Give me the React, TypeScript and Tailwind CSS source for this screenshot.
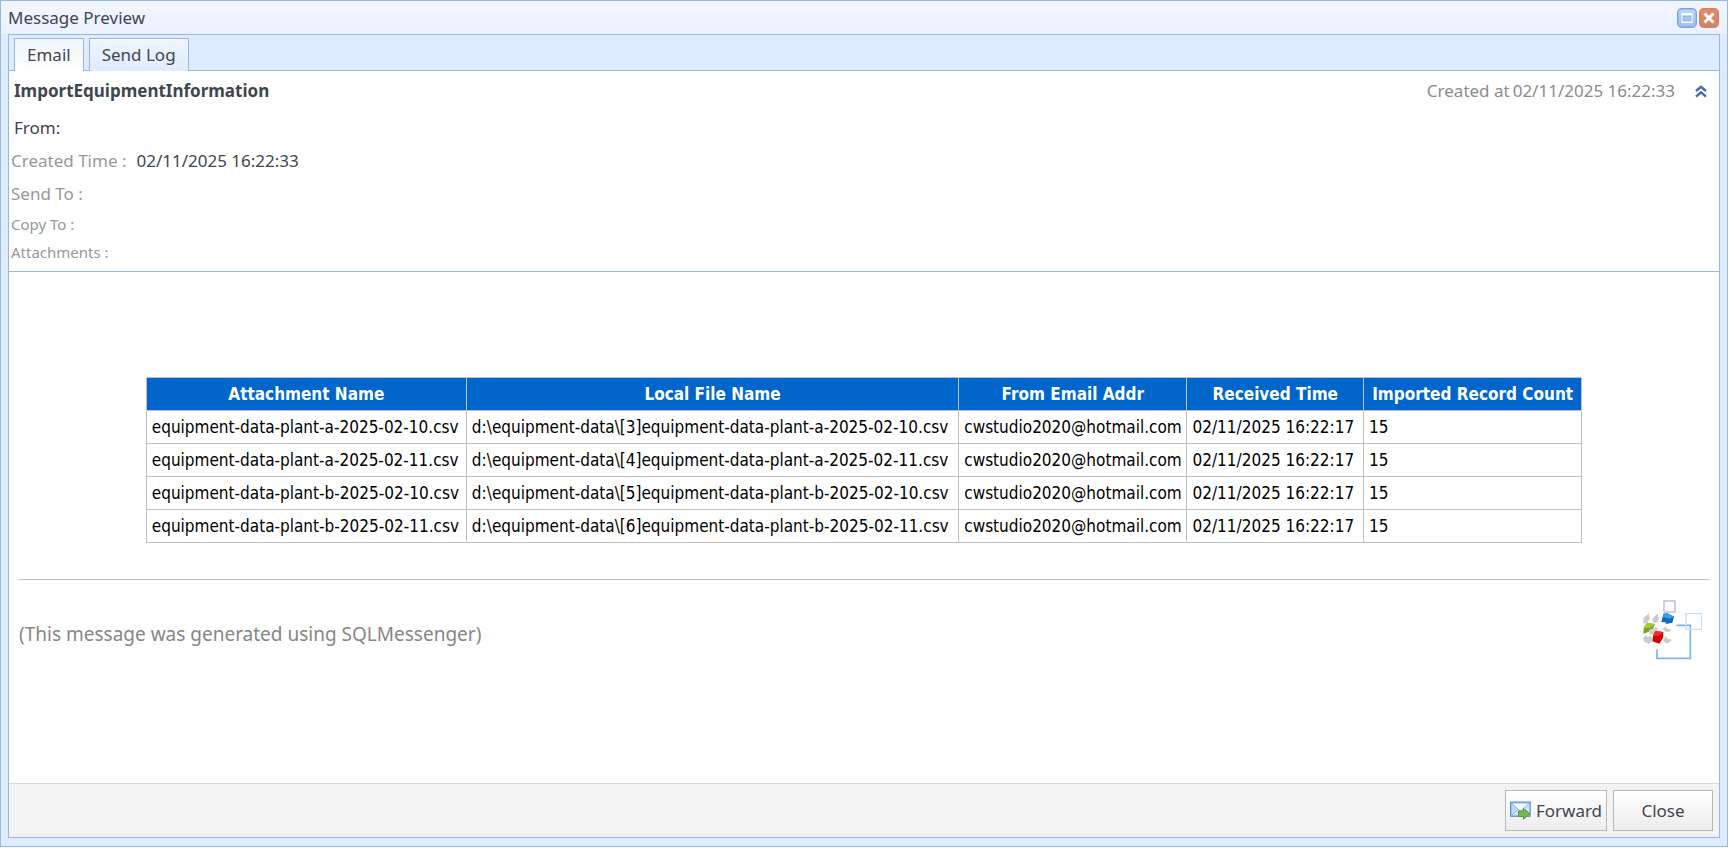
import { useState } from "react";

interface ImportedFile {
  attachment: string;
  localFile: string;
  from: string;
  received: string;
  count: number;
}

const files: ImportedFile[] = [
  {
    attachment: "equipment-data-plant-a-2025-02-10.csv",
    localFile: "d:\\equipment-data\\[3]equipment-data-plant-a-2025-02-10.csv",
    from: "cwstudio2020@hotmail.com",
    received: "02/11/2025 16:22:17",
    count: 15,
  },
  {
    attachment: "equipment-data-plant-a-2025-02-11.csv",
    localFile: "d:\\equipment-data\\[4]equipment-data-plant-a-2025-02-11.csv",
    from: "cwstudio2020@hotmail.com",
    received: "02/11/2025 16:22:17",
    count: 15,
  },
  {
    attachment: "equipment-data-plant-b-2025-02-10.csv",
    localFile: "d:\\equipment-data\\[5]equipment-data-plant-b-2025-02-10.csv",
    from: "cwstudio2020@hotmail.com",
    received: "02/11/2025 16:22:17",
    count: 15,
  },
  {
    attachment: "equipment-data-plant-b-2025-02-11.csv",
    localFile: "d:\\equipment-data\\[6]equipment-data-plant-b-2025-02-11.csv",
    from: "cwstudio2020@hotmail.com",
    received: "02/11/2025 16:22:17",
    count: 15,
  },
];

function MaximizeIcon() {
  return (
    <svg width="20" height="20" viewBox="0 0 20 20" aria-hidden="true">
      <defs>
        <linearGradient id="maxFill" x1="0" y1="0" x2="0" y2="1">
          <stop offset="0" stopColor="#bcd5f8" />
          <stop offset="1" stopColor="#9dc0f2" />
        </linearGradient>
      </defs>
      <rect x="0.7" y="0.7" width="18.6" height="18.6" rx="4" fill="url(#maxFill)" stroke="#7ba6e0" strokeWidth="1.4" />
      <rect x="4.500" y="5" width="11" height="10" fill="#fff" />
      <rect x="6" y="8" width="8" height="5" fill="#a9c6f2" stroke="#7ba7e2" strokeWidth="0.8" />
    </svg>
  );
}

function CloseIcon() {
  return (
    <svg width="20" height="20" viewBox="0 0 20 20" aria-hidden="true">
      <defs>
        <linearGradient id="closeFill" x1="0" y1="0" x2="0" y2="1">
          <stop offset="0" stopColor="#e58a6c" />
          <stop offset="1" stopColor="#cf8468" />
        </linearGradient>
      </defs>
      <rect x="0.7" y="0.7" width="18.6" height="18.6" rx="4" fill="url(#closeFill)" stroke="#d5805f" strokeWidth="1.4" />
      <path d="M5.500 5.500l9 9M14.500 5.500l-9 9" stroke="#fff" strokeWidth="3" />
    </svg>
  );
}

function CollapseIcon() {
  return (
    <svg width="12" height="13" viewBox="0 0 12 13" aria-hidden="true">
      <path d="M1 6l5-4.200L11 6M1 11.600l5-4.200 5 4.200" fill="none" stroke="#466aae" strokeWidth="2.400" />
    </svg>
  );
}

function ForwardIcon() {
  return (
    <svg width="21" height="19" viewBox="0 0 21 19" aria-hidden="true">
      <defs>
        <linearGradient id="mailFill" x1="0" y1="0" x2="1" y2="1">
          <stop offset="0" stopColor="#a9d3f5" />
          <stop offset="1" stopColor="#e6f2fc" />
        </linearGradient>
      </defs>
      <rect x="0.7" y="1.2" width="19.4" height="14" fill="url(#mailFill)" stroke="#5b8fd0" strokeWidth="1.3" />
      <path d="M1.4 2l9 8.2 9-8.2z" fill="#f4f9fe" stroke="#8fb2e0" strokeWidth="0.9" />
      <path d="M1.4 14.6l6.4-6.4" stroke="#7ea8dd" strokeWidth="0.9" />
      <path d="M8.500 10h5V7.400l6.400 5.400-6.400 5.400v-2.700h-5z" fill="#74b94c" stroke="#4c9a38" strokeWidth="1" strokeLinejoin="round" />
    </svg>
  );
}

function SqlMessengerLogo() {
  return (
    <svg width="60" height="60" viewBox="33 30 180 180" role="img" aria-label="SQLMessenger">
      <rect x="99" y="33" width="33" height="33" fill="#fff" stroke="#b9b4d8" strokeWidth="4" />
      {/* grey cubes */}
      <g fill="#cbcccc">
        <path d="M38 83l16-13v10l4 4-10 14-11 3z" />
        <path d="M65 85l16-15v10l4 3-4 12-10 5-6-5z" />
        <path d="M55 119l11-1 12-8 2 12-8 4-6 8-11-1z" />
        <path d="M95 117l10-9 1 7 16 5-10 6-12-2z" />
        <path d="M37 143l8-7 5 4 10-3 4 8-2 11-9 6-16-8z" />
        <path d="M98 147l7-10 2 8 16 5-14 11-12-7z" />
      </g>
      <path d="M48 98l23 4-5 15-11 2-1 6-17 6 1-18z" fill="#7fa31c" />
      <path d="M48 98l23 4-14 12-19-1z" fill="#a2cb38" />
      <path d="M97 72l11-3 21 11-5 18-19 4-1-5-13-1z" fill="#0d6fb4" />
      <path d="M97 72l11-3 21 11-15 6-18-6z" fill="#38a0e8" />
      <path d="M73 123l24 3-1 18-11 17-21-7 2-17z" fill="#cc0606" />
      <path d="M73 123l24 3-13 11-18 0z" fill="#fb2b2b" />
      <path d="M136 106h42v99H78V178" fill="none" stroke="#86b2de" strokeWidth="5" />
      <rect x="165" y="71" width="47" height="47" fill="none" stroke="#c6e2f8" strokeWidth="4" />
    </svg>
  );
}

export default function App() {
  const [tab, setTab] = useState("email");
  const [collapsed, setCollapsed] = useState(false);

  const tabClass = "border border-b-0 border-[#95b8ea] px-3 text-[17px] leading-8 ";
  const buttonClass =
    "flex h-[41px] items-center justify-center border border-[#b8b8b8] bg-gradient-to-b from-white to-[#ededed] text-[17px] text-[#3f464d]";

  return (
    <div className="h-screen min-h-[640px] bg-white pr-px pb-px font-['Noto_Sans',sans-serif] text-[#3f464d]">
      <div className="flex h-full flex-col border border-[#95b8ea] bg-[#dfebfe] px-[7px] pb-2">
        {/* Title bar */}
        <header className="-mx-[7px] flex h-[33px] shrink-0 items-center justify-between bg-gradient-to-b from-[#f2f6fe] to-[#ebf2fe] pr-2 pl-[7px]">
          <h1 className="text-[17px]">Message Preview</h1>
          <div className="flex gap-[2px]">
            <button aria-label="Maximize"><MaximizeIcon /></button>
            <button aria-label="Close window"><CloseIcon /></button>
          </div>
        </header>

        <main className="flex min-h-0 flex-1 flex-col border border-[#95b8ea] bg-white">
          {/* Tabs */}
          <div role="tablist" className="flex h-9 shrink-0 items-end gap-[5px] bg-[#dfebfe] pl-[5px] shadow-[inset_0_-1px_0_#95b8ea]">
            <button
              role="tab"
              aria-selected={tab === "email"}
              onClick={() => setTab("email")}
              className={tabClass + (tab === "email" ? "bg-gradient-to-b from-[#f0f5fe] to-white" : "bg-[#e6effd]")}
            >
              Email
            </button>
            <button
              role="tab"
              aria-selected={tab === "log"}
              onClick={() => setTab("log")}
              className={tabClass + (tab === "log" ? "bg-white" : "bg-gradient-to-b from-[#f0f5fe] to-[#e0ebfd]")}
            >
              Send Log
            </button>
          </div>

          {/* Message header */}
          <section className="shrink-0 border-b border-[#95b8ea] pb-[5px]">
            <div className="flex h-10 items-center justify-between pr-3 pl-[5px]">
              <h2 className="text-[17px] font-bold">ImportEquipmentInformation</h2>
              <div className="flex items-center text-[17px] text-[#8b8b8b]">
                <span>Created at</span>
                <span className="ml-[3px]">02/11/2025 16:22:33</span>
                <button aria-label="Collapse details" onClick={() => setCollapsed(!collapsed)} className="ml-5">
                  <CollapseIcon />
                </button>
              </div>
            </div>
            {!collapsed && (
              <>
                <p className="pl-[5px] text-[17px] leading-[33px]">From:</p>
                <p className="flex gap-[10px] pl-[2px] text-[17px] leading-[33px]">
                  <span className="text-[#96999c]">Created Time :</span>
                  <span>02/11/2025 16:22:33</span>
                </p>
                <p className="pl-[2px] text-[17px] leading-[33px] text-[#96999c]">Send To :</p>
                <p className="pl-[2px] text-[15px] leading-7 text-[#96999c]">Copy To :</p>
                <p className="pl-[2px] text-[15px] leading-7 text-[#96999c]">Attachments :</p>
              </>
            )}
          </section>

          {/* Message body */}
          <section className="min-h-0 flex-1 overflow-auto px-[10px] pt-[105px]">
            <table className="mx-auto w-[85%] table-fixed border-collapse font-['DejaVu_Sans_Condensed','DejaVu_Sans',sans-serif] text-[17px] leading-8 whitespace-nowrap text-black">
              <colgroup>
                <col className="w-[22.3%]" />
                <col className="w-[34.3%]" />
                <col className="w-[15.9%]" />
                <col className="w-[12.3%]" />
                <col className="w-[15.2%]" />
              </colgroup>
              <thead>
                <tr className="bg-[#0066cc] text-white">
                  <th className="border border-[#c0c0c0] p-0">Attachment Name</th>
                  <th className="border border-[#c0c0c0] p-0">Local File Name</th>
                  <th className="border border-[#c0c0c0] p-0">From Email Addr</th>
                  <th className="border border-[#c0c0c0] p-0">Received Time</th>
                  <th className="border border-[#c0c0c0] p-0">Imported Record Count</th>
                </tr>
              </thead>
              <tbody>
                {files.map((file) => (
                  <tr key={file.localFile}>
                    <td className="border border-[#c0c0c0] py-0 pr-0 pl-[5px]">{file.attachment}</td>
                    <td className="border border-[#c0c0c0] py-0 pr-0 pl-[5px]">{file.localFile}</td>
                    <td className="border border-[#c0c0c0] py-0 pr-0 pl-[5px]">{file.from}</td>
                    <td className="border border-[#c0c0c0] py-0 pr-0 pl-[5px]">{file.received}</td>
                    <td className="border border-[#c0c0c0] py-0 pr-0 pl-[5px]">{file.count}</td>
                  </tr>
                ))}
              </tbody>
            </table>

            <div className="mt-9 flex items-start justify-between border-t border-[#c0c0c0] pt-5 pr-[7px]">
              <p className="pt-[18px] text-[19px] leading-8 text-[#868686]">
                (This message was generated using SQLMessenger)
              </p>
              <SqlMessengerLogo />
            </div>
          </section>

          {/* Actions */}
          <footer className="flex h-[54px] shrink-0 items-center justify-end gap-[6px] border-t border-[#d9d9d9] bg-[#f3f3f3] pr-[6px]">
            <button className={buttonClass + " w-[102px] gap-[5px]"}>
              <ForwardIcon />
              Forward
            </button>
            <button className={buttonClass + " w-[100px]"}>Close</button>
          </footer>
        </main>
      </div>
    </div>
  );
}
